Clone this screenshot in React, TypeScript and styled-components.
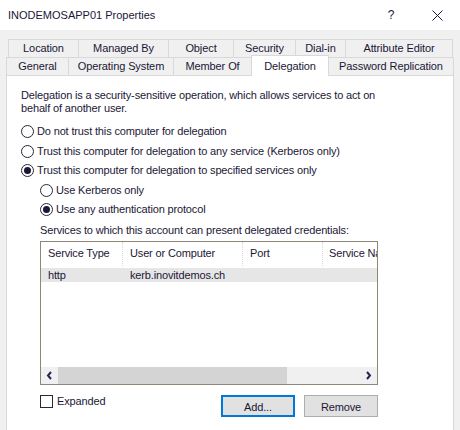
import React from "react";
import styled, { createGlobalStyle } from "styled-components";

const Global = createGlobalStyle`
  html, body { margin: 0; padding: 0; }
  body {
    width: 460px; height: 430px; overflow: hidden; background: #f0f0f0;
    font-family: "Liberation Sans", Arial, sans-serif; font-size: 11px; color: #1b1736;
  }
  #root { width: 460px; height: 430px; }
`;

const Window = styled.div`
  width: 460px; height: 430px; display: flex; flex-direction: column;
  background: #f0f0f0; overflow: hidden;
`;

const TitleBar = styled.div`
  height: 30px; flex: none; background: #fff; display: flex; align-items: center;
  padding-left: 8px;
`;

const Title = styled.div`
  flex: 1; font-size: 11px; line-height: 13px; white-space: nowrap;
`;

const CaptionButton = styled.div`
  width: 46px; height: 30px; display: flex; align-items: center; justify-content: center;
  font-size: 12px; color: #1b1736;
`;

const Tabs = styled.div`
  padding-top: 9px; display: flex; flex-direction: column; flex: none;
  letter-spacing: -0.1px;
`;

const TabRow = styled.div<{ $inset: number }>`
  display: flex; align-items: flex-end; height: 18px; margin-left: ${(p) => p.$inset}px;
`;

const Tab = styled.div<{ $w: number; $active?: boolean }>`
  box-sizing: border-box; flex: none;
  width: ${(p) => p.$w}px;
  height: ${(p) => (p.$active ? 21 : 18)}px;
  margin-bottom: ${(p) => (p.$active ? -1 : 0)}px;
  margin-right: -1px;
  border: 1px solid #d9d9d9; border-bottom: none;
  background: ${(p) => (p.$active ? "#ffffff" : "#f0f0f0")};
  position: relative; z-index: ${(p) => (p.$active ? 1 : 0)};
  display: flex; align-items: center; justify-content: center;
  line-height: 13px; white-space: nowrap;
`;

const Panel = styled.div`
  box-sizing: border-box; margin-left: 6px; width: 448px; flex: 1;
  background: #fff; border: 1px solid #d9d9d9; border-bottom: none;
  padding: 13px 0 0 14px; letter-spacing: -0.15px;
`;

const Para = styled.p`
  margin: 0; line-height: 13px; white-space: nowrap;
`;

const RadioList = styled.div`
  margin-top: 7px; display: flex; flex-direction: column;
`;

const RadioRow = styled.label<{ $indent: number }>`
  height: 19.5px; display: flex; align-items: center; gap: 3px;
  padding-left: ${(p) => p.$indent}px; white-space: nowrap; line-height: 13px;
`;

const RadioCircle = styled.span<{ $checked?: boolean }>`
  box-sizing: border-box; width: 13px; height: 13px; border-radius: 50%;
  border: 1px solid #2a2638; background: #fff; flex: none;
  display: grid; place-items: center;
  &::after {
    content: ""; width: 7px; height: 7px; border-radius: 50%;
    background: ${(p) => (p.$checked ? "#1b1736" : "transparent")};
  }
`;

const SectionLabel = styled.div`
  margin-top: 4px; padding-left: 19px; line-height: 13px; white-space: nowrap;
`;

const ListBox = styled.div`
  box-sizing: border-box; margin-top: 4.5px; margin-left: 19px;
  width: 338px; height: 144px; border: 1px solid #8f8579; background: #fff;
  display: flex; flex-direction: column; overflow: hidden;
`;

const HeaderRow = styled.div`
  height: 25px; flex: none; display: flex;
`;

const HeaderCell = styled.div<{ $w: number; $last?: boolean }>`
  box-sizing: border-box; flex: none; width: ${(p) => p.$w}px; height: 24px;
  padding: 5px 0 0 ${(p) => (p.$last ? 6 : 7)}px; line-height: 13px; white-space: nowrap;
  overflow: hidden;
  border-right: ${(p) => (p.$last ? "none" : "1px dotted #d8d8d8")};
`;

const Rows = styled.div`
  flex: 1; display: flex; flex-direction: column;
`;

const DataRow = styled.div`
  margin-top: 1px; height: 14px; display: flex; background: #e6e6e6;
`;

const DataCell = styled.div<{ $w: number }>`
  box-sizing: border-box; flex: none; width: ${(p) => p.$w}px; padding-left: 7px;
  line-height: 14px; white-space: nowrap; overflow: hidden;
`;

const HScroll = styled.div`
  height: 17px; flex: none; display: flex; background: #f0f0f0;
`;

const ScrollArrow = styled.div`
  width: 17px; height: 17px; flex: none; display: flex; align-items: center; justify-content: center;
`;

const ScrollThumb = styled.div`
  width: 229px; height: 17px; flex: none; background: #d4d4d4;
`;

const ScrollTrack = styled.div`
  flex: 1;
`;

const BottomRow = styled.div`
  margin-top: 10px; margin-left: 19px; width: 338px; display: flex; align-items: flex-start;
`;

const CheckLabel = styled.label`
  display: flex; align-items: center; gap: 4px; line-height: 13px; white-space: nowrap;
`;

const CheckBox = styled.span`
  box-sizing: border-box; width: 13px; height: 13px; border: 1px solid #2a2638; background: #fff;
`;

const Buttons = styled.div`
  margin-left: auto; display: flex; gap: 9px;
`;

const Button = styled.button<{ $default?: boolean }>`
  box-sizing: border-box; width: 74px; height: 22px; padding: 0;
  font-family: "Liberation Sans", Arial, sans-serif; font-size: 11px; color: #1b1736;
  letter-spacing: -0.15px;
  background: #e1e1e1;
  border: ${(p) => (p.$default ? "2px solid #0078d7" : "1px solid #adadad")};
  display: flex; align-items: center; justify-content: center; padding-top: 1px;
`;

const row1 = [
  { label: "Location", w: 71 },
  { label: "Managed By", w: 91 },
  { label: "Object", w: 66 },
  { label: "Security", w: 63 },
  { label: "Dial-in", w: 51 },
  { label: "Attribute Editor", w: 108 },
];

const row2 = [
  { label: "General", w: 63 },
  { label: "Operating System", w: 106 },
  { label: "Member Of", w: 79 },
  { label: "Delegation", w: 78, active: true },
  { label: "Password Replication", w: 126 },
];

const columns = [
  { label: "Service Type", w: 82 },
  { label: "User or Computer", w: 120 },
  { label: "Port", w: 80 },
  { label: "Service Name", w: 100 },
];

const Chevron = ({ dir }: { dir: "left" | "right" }) => (
  <svg width="7" height="9" viewBox="0 0 7 9">
    <path
      d={dir === "left" ? "M5 1 L2 4.5 L5 8" : "M2 1 L5 4.5 L2 8"}
      fill="none"
      stroke="#2a2250"
      strokeWidth="2"
    />
  </svg>
);

export default function App() {
  return (
    <Window>
      <Global />
      <TitleBar>
        <Title>INODEMOSAPP01 Properties</Title>
        <CaptionButton>?</CaptionButton>
        <CaptionButton>
          <svg width="11" height="11" viewBox="0 0 11 11">
            <path d="M0.5 0.5 L10.5 10.5 M10.5 0.5 L0.5 10.5" stroke="#1b1736" strokeWidth="1" />
          </svg>
        </CaptionButton>
      </TitleBar>
      <Tabs>
        <TabRow $inset={8}>
          {row1.map((t) => (
            <Tab key={t.label} $w={t.w}>
              {t.label}
            </Tab>
          ))}
        </TabRow>
        <TabRow $inset={6}>
          {row2.map((t) => (
            <Tab key={t.label} $w={t.w} $active={t.active}>
              {t.label}
            </Tab>
          ))}
        </TabRow>
      </Tabs>
      <Panel>
        <Para>
          Delegation is a security-sensitive operation, which allows services to act on
          <br />
          behalf of another user.
        </Para>
        <RadioList>
          <RadioRow $indent={0}>
            <RadioCircle />
            Do not trust this computer for delegation
          </RadioRow>
          <RadioRow $indent={0}>
            <RadioCircle />
            Trust this computer for delegation to any service (Kerberos only)
          </RadioRow>
          <RadioRow $indent={0}>
            <RadioCircle $checked />
            Trust this computer for delegation to specified services only
          </RadioRow>
          <RadioRow $indent={19}>
            <RadioCircle />
            Use Kerberos only
          </RadioRow>
          <RadioRow $indent={19}>
            <RadioCircle $checked />
            Use any authentication protocol
          </RadioRow>
        </RadioList>
        <SectionLabel>Services to which this account can present delegated credentials:</SectionLabel>
        <ListBox>
          <HeaderRow>
            {columns.map((c, i) => (
              <HeaderCell key={c.label} $w={c.w} $last={i === columns.length - 1}>
                {c.label}
              </HeaderCell>
            ))}
          </HeaderRow>
          <Rows>
            <DataRow>
              <DataCell $w={82}>http</DataCell>
              <DataCell $w={120}>kerb.inovitdemos.ch</DataCell>
              <DataCell $w={80}></DataCell>
              <DataCell $w={54}></DataCell>
            </DataRow>
          </Rows>
          <HScroll>
            <ScrollArrow>
              <Chevron dir="left" />
            </ScrollArrow>
            <ScrollThumb />
            <ScrollTrack />
            <ScrollArrow>
              <Chevron dir="right" />
            </ScrollArrow>
          </HScroll>
        </ListBox>
        <BottomRow>
          <CheckLabel>
            <CheckBox />
            Expanded
          </CheckLabel>
          <Buttons>
            <Button $default>Add...</Button>
            <Button>Remove</Button>
          </Buttons>
        </BottomRow>
      </Panel>
    </Window>
  );
}
